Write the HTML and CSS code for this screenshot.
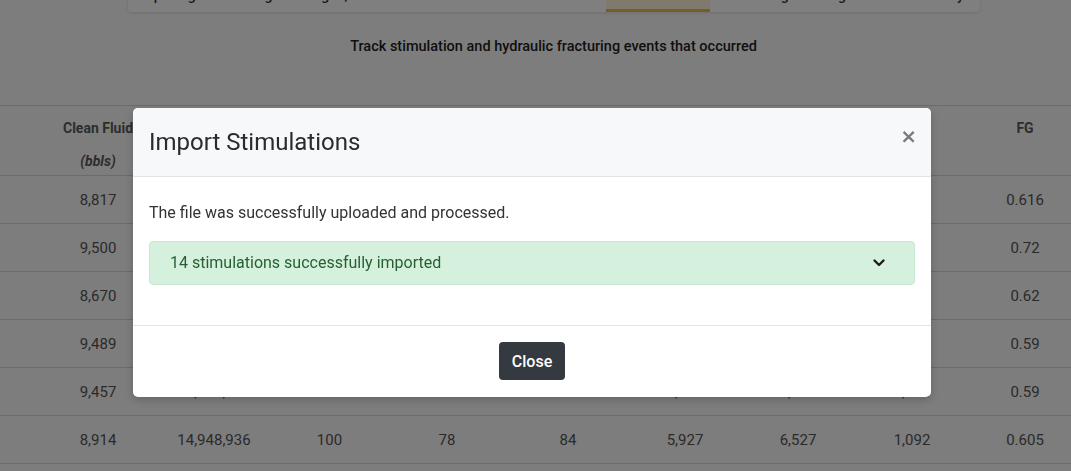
FILE: index.html
```html
<!DOCTYPE html>
<html lang="en">
  <head>
    <meta charset="UTF-8" />
    <meta name="viewport" content="width=device-width, initial-scale=1.0" />
    <title>Stimulation</title>
    <link rel="stylesheet" href="styles.css">
  </head>
  <body>
    <div class="page">
      <nav class="tabs">
        <a class="tab">Ops Log</a>
        <a class="tab">Casing</a>
        <a class="tab">Tag In, Out</a>
        <a class="tab">Rods</a>
        <a class="tab">Perfs</a>
        <a class="tab">Cement</a>
        <a class="tab active">Stimulation</a>
        <a class="tab">Swabbing</a>
        <a class="tab">Engines</a>
        <a class="tab">Inventory</a>
      </nav>

      <p class="subtitle">Track stimulation and hydraulic fracturing events that occurred</p>

      <table class="stim-table">
        <colgroup>
          <col class="c-pad">
          <col class="c116"><col class="c116"><col class="c115"><col class="c120">
          <col class="c122"><col class="c112"><col class="c114"><col class="c114"><col class="c112">
        </colgroup>
        <thead>
          <tr>
            <th></th>
            <th><div class="label">Clean Fluid</div><div class="unit">(bbls)</div></th>
            <th><div class="label">Proppant</div><div class="unit">(lbs)</div></th>
            <th><div class="label">Stages</div><div class="unit">(#)</div></th>
            <th><div class="label">Avg Rate</div><div class="unit">(bpm)</div></th>
            <th><div class="label">Max Rate</div><div class="unit">(bpm)</div></th>
            <th><div class="label">Avg PSI</div><div class="unit">(psi)</div></th>
            <th><div class="label">Max PSI</div><div class="unit">(psi)</div></th>
            <th><div class="label">ISIP</div><div class="unit">(psi)</div></th>
            <th><div class="label">FG</div></th>
          </tr>
        </thead>
        <tbody>
          <tr><td></td><td>8,817</td><td>14,212,480</td><td>100</td><td>80</td><td>86</td><td>5,844</td><td>6,410</td><td>1,140</td><td>0.616</td></tr>
          <tr><td></td><td>9,500</td><td>15,031,220</td><td>100</td><td>82</td><td>88</td><td>6,102</td><td>6,690</td><td>1,305</td><td>0.72</td></tr>
          <tr><td></td><td>8,670</td><td>14,502,115</td><td>100</td><td>79</td><td>85</td><td>5,960</td><td>6,488</td><td>1,180</td><td>0.62</td></tr>
          <tr><td></td><td>9,489</td><td>14,880,640</td><td>100</td><td>81</td><td>86</td><td>5,875</td><td>6,512</td><td>1,060</td><td>0.59</td></tr>
          <tr><td></td><td>9,457</td><td>14,760,318</td><td>100</td><td>80</td><td>85</td><td>5,901</td><td>6,470</td><td>1,055</td><td>0.59</td></tr>
          <tr><td></td><td>8,914</td><td>14,948,936</td><td>100</td><td>78</td><td>84</td><td>5,927</td><td>6,527</td><td>1,092</td><td>0.605</td></tr>
        </tbody>
      </table>
    </div>

    <!-- import result dialog -->
    <div class="backdrop">
      <div class="modal">
        <div class="modal-header">
          <h5 class="modal-title">Import Stimulations</h5>
          <button class="modal-close" type="button">&times;</button>
        </div>
        <div class="modal-body">
          <p class="modal-text">The file was successfully uploaded and processed.</p>
          <div class="alert-success">
            <span>14 stimulations successfully imported</span>
            <svg class="chevron" width="14" height="14" viewBox="0 0 14 14">
              <path d="M2.5 4.5 L7 9 L11.5 4.5" fill="none" stroke="#1c1c1c" stroke-width="2.4" stroke-linecap="round" stroke-linejoin="round"/>
            </svg>
          </div>
        </div>
        <div class="modal-footer">
          <button class="btn-close" type="button">Close</button>
        </div>
      </div>
    </div>
  </body>
</html>
```

FILE: styles.css
```css
/* Stimulation page + import dialog */
body {
  font-family: Roboto, "Liberation Sans", Arial, sans-serif;
  margin: 0;
  padding: 0;
  background-color: #fbfbfb;
  color: #222;
  overflow: hidden;
  height: 471px;
}

.page {
  width: 1081px;
}

/* tab strip (page is scrolled, only the bottom shows) */
.tabs {
  display: flex;
  justify-content: space-between;
  width: 852px;
  height: 34px;
  margin: -22px 0 0 128px;
  background-color: #fff;
  border-radius: 0 0 4px 4px;
  box-shadow: 0 1px 4px rgba(0, 0, 0, 0.12);
}

.tab {
  display: flex;
  align-items: center;
  padding: 0 16px;
  font-size: 14px;
  font-weight: 500;
  color: #333;
  box-sizing: border-box;
}

.tab.active {
  background-color: #fff5d9;
  border-bottom: 3px solid #e9bd4c;
  padding-top: 3px;
}

.subtitle {
  margin: 25px 0 0;
  padding-left: 36px;
  line-height: 20px;
  font-size: 14.5px;
  font-weight: 500;
  text-align: center;
  width: 1035px;
  color: #1e1e1e;
}

/* data table */
.stim-table {
  margin-top: 48px;
  border-collapse: collapse;
  table-layout: fixed;
  width: 1081px;
  border-top: 1px solid #d6d6d6;
}

.c-pad { width: 40px; }
.c112 { width: 112px; }
.c114 { width: 114px; }
.c115 { width: 115px; }
.c116 { width: 116px; }
.c120 { width: 120px; }
.c122 { width: 122px; }

.stim-table th {
  padding: 11px 4px 3px;
  vertical-align: top;
  font-size: 14px;
  font-weight: 700;
  color: #5a5a5a;
  text-align: center;
  border-bottom: 1px solid #d6d6d6;
  white-space: nowrap;
}

.stim-table .label {
  line-height: 22px;
}

.stim-table .unit {
  margin-top: 11px;
  line-height: 22px;
  font-style: italic;
}

.stim-table td {
  height: 47px;
  padding: 0 4px;
  font-size: 15px;
  color: #555;
  text-align: center;
  border-bottom: 1px solid #d6d6d6;
}

/* dialog */
.backdrop {
  position: fixed;
  inset: 0;
  background-color: rgba(0, 0, 0, 0.5);
  display: flex;
  justify-content: center;
  align-items: flex-start;
  padding: 108px 7px 0 0;
}

.modal {
  width: 798px;
  background-color: #fff;
  border-radius: 5px;
  overflow: hidden;
  box-shadow: 0 3px 10px rgba(0, 0, 0, 0.2);
}

.modal-header {
  display: flex;
  align-items: center;
  padding: 16px;
  height: 36px;
  background-color: #f7f8fa;
  border-bottom: 1px solid #e2e4e7;
}

.modal-title {
  margin: 0;
  font-size: 24px;
  font-weight: 400;
  line-height: 36px;
  color: #2b2b2b;
}

.modal-close {
  margin-left: auto;
  margin-right: -2px;
  margin-top: -12px;
  padding: 0;
  border: none;
  background: none;
  font-family: "DejaVu Sans", sans-serif;
  font-size: 20px;
  font-weight: 700;
  line-height: 1;
  color: #7a7a7a;
  cursor: pointer;
}

.modal-body {
  padding: 24px 16px;
}

.modal-text {
  margin: 0 0 16px;
  font-size: 16px;
  line-height: 24px;
  color: #333;
}

.alert-success {
  display: flex;
  align-items: center;
  justify-content: space-between;
  margin-bottom: 16px;
  padding: 10px 28px 10px 20px;
  line-height: 22px;
  font-size: 16px;
  color: #245f35;
  background-color: #d5f0dc;
  border: 1px solid #c8e8d0;
  border-radius: 4px;
}

.chevron {
  display: block;
}

.modal-footer {
  display: flex;
  justify-content: center;
  padding: 16px 16px 17px;
  border-top: 1px solid #e2e4e7;
}

.btn-close {
  height: 38px;
  padding: 0 13px;
  border: none;
  border-radius: 4px;
  background-color: #343a40;
  color: #fff;
  font-family: Roboto, "Liberation Sans", Arial, sans-serif;
  font-size: 16px;
  font-weight: 500;
  cursor: pointer;
}
```
